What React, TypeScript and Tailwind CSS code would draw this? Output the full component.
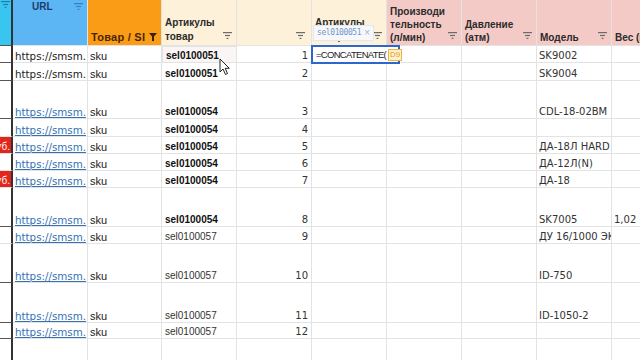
import React from "react";

const grid = "border-r border-b border-[#e3e3e3]";
const sans = { fontFamily: '"Liberation Sans", Arial, sans-serif' };
const dejavu = { fontFamily: '"DejaVu Sans", Verdana, sans-serif' };

function FilterIcon({ color = "#6b6b6b" }: { color?: string }) {
  return (
    <svg width="9" height="7" viewBox="0 0 9 7" className="shrink-0">
      <rect x="0" y="0" width="9" height="1.2" fill={color} />
      <rect x="2" y="2.9" width="5" height="1.2" fill={color} />
      <rect x="3.6" y="5.8" width="1.8" height="1.2" fill={color} />
    </svg>
  );
}

function FunnelIcon() {
  return (
    <svg width="8" height="8" viewBox="0 0 8 8" className="shrink-0">
      <path d="M0 0 H8 L5 3.6 V8 H3 V3.6 Z" fill="#3a2208" />
    </svg>
  );
}

type Row = {
  h: string;
  red?: boolean;
  dark?: boolean;
  url: string;
  link: boolean;
  d: string;
  bold: boolean;
  e: string;
  i: string;
  j?: string;
};

const rows: Row[] = [
  { h: "h-[17px]", dark: true, url: "https://smsm.", link: false, d: "sel0100051", bold: true, e: "1", i: "SK9002" },
  { h: "h-[18px]", dark: true, url: "https://smsm.", link: false, d: "sel0100051", bold: true, e: "2", i: "SK9004" },
  { h: "h-[38px]", dark: true, url: "https://smsm.", link: true, d: "sel0100054", bold: true, e: "3", i: "CDL-18-02BM" },
  { h: "h-[18px]", url: "https://smsm.", link: true, d: "sel0100054", bold: true, e: "4", i: "" },
  { h: "h-[17px]", red: true, url: "https://smsm.", link: true, d: "sel0100054", bold: true, e: "5", i: "ДА-18Л HARD" },
  { h: "h-[17px]", url: "https://smsm.", link: true, d: "sel0100054", bold: true, e: "6", i: "ДА-12Л(N)" },
  { h: "h-[17px]", red: true, url: "https://smsm.", link: true, d: "sel0100054", bold: true, e: "7", i: "ДА-18" },
  { h: "h-[39px]", dark: true, url: "https://smsm.", link: true, d: "sel0100054", bold: true, e: "8", i: "SK7005", j: "1,02" },
  { h: "h-[17px]", url: "https://smsm.", link: true, d: "sel0100057", bold: false, e: "9", i: "ДУ 16/1000 ЭК" },
  { h: "h-[39px]", dark: true, url: "https://smsm.", link: true, d: "sel0100057", bold: false, e: "10", i: "ID-750" },
  { h: "h-[40px]", dark: true, url: "https://smsm.", link: true, d: "sel0100057", bold: false, e: "11", i: "ID-1050-2" },
  { h: "h-[16px]", dark: true, url: "https://smsm.", link: true, d: "sel0100057", bold: false, e: "12", i: "" },
  { h: "h-[40px]", url: "", link: false, d: "", bold: false, e: "", i: "" },
];

const cell = "flex items-end overflow-hidden whitespace-nowrap pb-0 leading-[12px]";

export default function App() {
  return (
    <div className="relative w-[640px] h-[360px] overflow-hidden bg-white text-[#222]" style={sans}>
      {/* Header */}
      <div className="flex h-[46px]">
        <div className="w-[13px] shrink-0 bg-[#38c6f1] border-r-2 border-r-[#333] border-b border-b-[#555] flex items-start justify-end pt-[1px] pr-[1px] overflow-hidden">
          <FilterIcon color="#1f7fa8" />
        </div>
        <div className={`w-[75px] shrink-0 bg-[#5cb6f3] ${grid} flex items-start justify-between pl-[19px] pr-[4px]`}>
          <span className="text-[10px] font-bold leading-[13px] text-[#1c3c70]">URL</span>
          <div className="pt-[3px]"><FilterIcon color="#3a7fc4" /></div>
        </div>
        <div className={`w-[74px] shrink-0 bg-[#fb9c16] ${grid} flex items-end justify-between pl-[3px] pr-[4px] pb-[1px]`}>
          <span className="text-[11px] font-bold leading-[13px] tracking-[0.25px] text-[#4a2604]">Товар / SI</span>
          <div className="pb-[3px]"><FunnelIcon /></div>
        </div>
        <div className={`w-[75px] shrink-0 bg-[#fdf1d9] ${grid} flex items-end justify-between pl-[3px] pr-[4px] pb-[1px]`}>
          <span className="text-[10px] font-bold leading-[14px] text-[#2b2b2b] whitespace-pre">{"Артикулы\nтовар"}</span>
          <div className="pb-[5px]"><FilterIcon /></div>
        </div>
        <div className={`w-[75px] shrink-0 bg-[#fdf1d9] ${grid} flex items-end justify-end pr-[6px] pb-[6px]`}>
          <FilterIcon />
        </div>
        <div className={`w-[75px] shrink-0 bg-[#fdf1d9] ${grid} flex items-end justify-between pl-[3px] pr-[4px] pb-[1px]`}>
          <span className="text-[10px] font-bold leading-[14px] text-[#2b2b2b] whitespace-pre">{"Артикулы\nтовар"}</span>
          <div className="pb-[5px]"><FilterIcon /></div>
        </div>
        <div className={`w-[75px] shrink-0 bg-[#f4cac6] ${grid} flex items-end justify-between pl-[3px] pr-[4px] pb-[1px]`}>
          <span className="text-[10px] font-bold leading-[13px] text-[#2b2b2b] whitespace-pre">{"Производи\nтельность\n(л/мин)"}</span>
          <div className="pb-[5px]"><FilterIcon /></div>
        </div>
        <div className={`w-[75px] shrink-0 bg-[#f4cac6] ${grid} flex items-end justify-between pl-[3px] pr-[4px] pb-[1px]`}>
          <span className="text-[10px] font-bold leading-[13px] text-[#2b2b2b] whitespace-pre">{"Давление\n(атм)"}</span>
          <div className="pb-[5px]"><FilterIcon /></div>
        </div>
        <div className={`w-[75px] shrink-0 bg-[#f4cac6] ${grid} flex items-end justify-between pl-[3px] pr-[4px] pb-[1px]`}>
          <span className="text-[10px] font-bold leading-[13px] text-[#2b2b2b]">Модель</span>
          <div className="pb-[5px]"><FilterIcon /></div>
        </div>
        <div className={`w-[60px] shrink-0 bg-[#f4cac6] ${grid} flex items-end pl-[3px] pb-[1px] overflow-hidden whitespace-nowrap`}>
          <span className="text-[10px] font-bold leading-[13px] text-[#2b2b2b]">Вес (кг)</span>
        </div>
      </div>

      {/* Body rows */}
      {rows.map((r, idx) => (
        <div key={idx} className={`flex ${r.h}`}>
          <div
            className={`w-[13px] shrink-0 border-r-2 border-r-[#333] border-b ${r.dark ? "border-b-[#555]" : "border-b-[#e3e3e3]"} ${r.red ? "bg-[#e3261b]" : "bg-white"} ${cell} justify-end pr-[1px]`}
          >
            {r.red && <span className="text-[10px] text-white">руб.</span>}
          </div>
          <div className={`w-[75px] shrink-0 ${grid} ${cell} pl-[2px]`} style={dejavu}>
            <span className={`text-[10.3px] ${r.link ? "underline text-[#3571b3]" : "text-[#222]"}`}>{r.url}</span>
          </div>
          <div className={`w-[74px] shrink-0 ${grid} ${cell} pl-[2px]`}>
            <span className="text-[11px] text-[#222]">{r.url ? "sku" : ""}</span>
          </div>
          <div
            className={`w-[75px] shrink-0 ${grid} ${cell} pl-[3px] ${idx === 0 ? "border-t border-l border-[#b9a9a9] bg-[#fbf5f5]" : ""}`}
          >
            <span className={`text-[10px] ${r.bold ? "font-bold text-[#111]" : "text-[#333]"}`}>{r.d}</span>
          </div>
          <div className={`w-[75px] shrink-0 ${grid} ${cell} justify-end pr-[3px]`} style={dejavu}>
            <span className="text-[10px] text-[#333]">{r.e}</span>
          </div>
          <div className={`w-[75px] shrink-0 ${grid} ${cell}`} />
          <div className={`w-[75px] shrink-0 ${grid} ${cell}`} />
          <div className={`w-[75px] shrink-0 ${grid} ${cell}`} />
          <div className={`w-[75px] shrink-0 ${grid} ${cell} pl-[2px]`} style={dejavu}>
            <span className="text-[10px] text-[#333]">{r.i}</span>
          </div>
          <div className={`w-[60px] shrink-0 ${grid} ${cell} pl-[2px]`} style={dejavu}>
            <span className="text-[10px] text-[#333]">{r.j ?? ""}</span>
          </div>
        </div>
      ))}

      {/* Formula editor in cell */}
      <div className="absolute left-[311px] top-[45px] w-[89px] h-[19px] border-2 border-[#2b67cf] bg-white flex items-center pl-[3px]">
        <span className="text-[9.5px] tracking-[-0.7px] text-[#222] leading-none">=CONCATENATE(</span>
        <span className="ml-[2px] px-[1px] text-[8px] leading-[10px] border border-[#f0b43c] bg-[#fdf1cc] text-[#e59a1c]">D9</span>
      </div>

      {/* Reference tooltip */}
      <div className="absolute left-[313px] top-[25px] w-[61px] h-[16px] bg-[#f6f8fb] border border-[#e4e8ee] flex items-center justify-between px-[3px]">
        <span className="text-[8px] tracking-[-0.4px] text-[#7396c8]" style={{ fontFamily: '"DejaVu Sans Mono", monospace' }}>sel0100051</span>
        <span className="text-[10px] text-[#aab4c4] leading-none">×</span>
      </div>

      {/* Mouse cursor */}
      <svg className="absolute left-[219px] top-[58px]" width="12" height="18" viewBox="0 0 12 18">
        <path d="M1 1 L1 14 L4 11 L6.5 16.5 L8.5 15.6 L6.2 10.3 L10.3 10.3 Z" fill="#fff" stroke="#222" strokeWidth="1" strokeLinejoin="round" />
      </svg>
    </div>
  );
}
